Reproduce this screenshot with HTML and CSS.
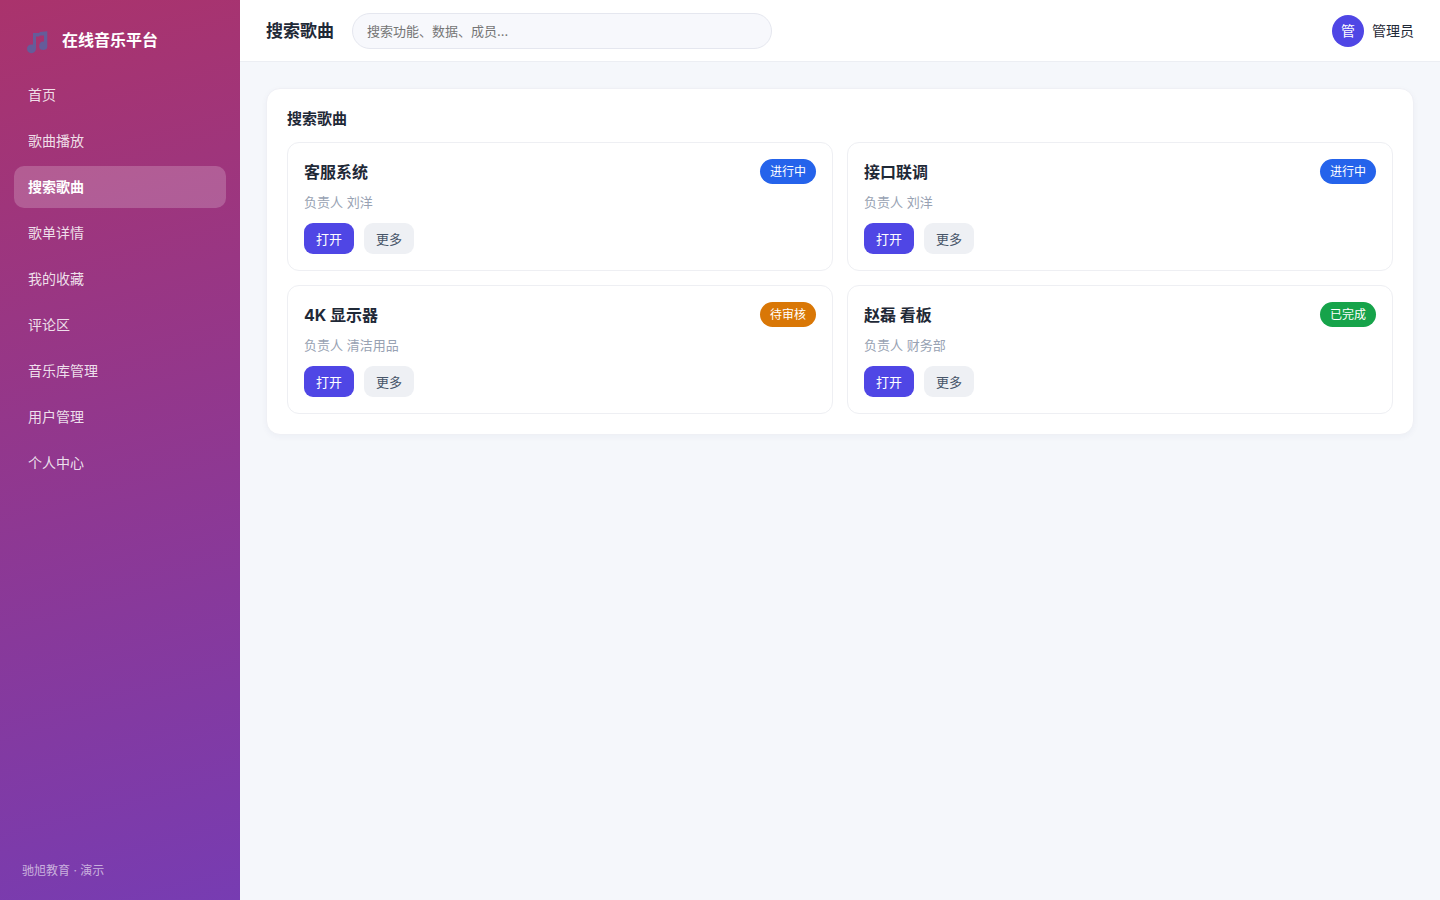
FILE: index.html
```html
<!DOCTYPE html>
<html lang="zh-CN">
<head>
    <meta charset="UTF-8">
    <meta name="viewport" content="width=device-width, initial-scale=1.0">
    <title>搜索歌曲</title>
    <link rel="stylesheet" href="styles.css">
</head>
<body>
    <div class="app">
        <aside class="sidebar">
            <div class="brand">
                <svg class="brand-icon" viewBox="0 0 22 24" aria-hidden="true">
                    <path d="M7 3 H13 L14 2 L21.3 1.2 V17 C21.3 19 19.5 20 17.3 20 C14.8 20 13.2 19 13.2 16 C13.2 13 14.8 11.2 18 11.4 V5.4 L14 5.6 L13 6.6 H10 V18.6 C10 21.2 8.4 23.2 5.4 23.2 C2.6 23.2 1 21.2 1 18.8 C1 16 3.2 14 7 14.6 Z"/>
                </svg>
                <span>在线音乐平台</span>
            </div>
            <nav class="nav">
                <a class="nav-item" href="#">首页</a>
                <a class="nav-item" href="#">歌曲播放</a>
                <a class="nav-item active" href="#">搜索歌曲</a>
                <a class="nav-item" href="#">歌单详情</a>
                <a class="nav-item" href="#">我的收藏</a>
                <a class="nav-item" href="#">评论区</a>
                <a class="nav-item" href="#">音乐库管理</a>
                <a class="nav-item" href="#">用户管理</a>
                <a class="nav-item" href="#">个人中心</a>
            </nav>
            <div class="sidebar-footer">驰旭教育 · 演示</div>
        </aside>

        <div class="main">
            <header class="topbar">
                <h1 class="page-title">搜索歌曲</h1>
                <input class="search" type="search" placeholder="搜索功能、数据、成员…" aria-label="搜索">
                <div class="user">
                    <span class="avatar">管</span>
                    <span>管理员</span>
                </div>
            </header>

            <main class="content">
                <section class="panel">
                    <h2 class="panel-title">搜索歌曲</h2>
                    <div class="grid">
                        <article class="card">
                            <div class="card-head">
                                <h3 class="card-title">客服系统</h3>
                                <span class="badge badge-blue">进行中</span>
                            </div>
                            <p class="card-meta">负责人 刘洋</p>
                            <div class="actions">
                                <button class="btn btn-primary" type="button">打开</button>
                                <button class="btn" type="button">更多</button>
                            </div>
                        </article>
                        <article class="card">
                            <div class="card-head">
                                <h3 class="card-title">接口联调</h3>
                                <span class="badge badge-blue">进行中</span>
                            </div>
                            <p class="card-meta">负责人 刘洋</p>
                            <div class="actions">
                                <button class="btn btn-primary" type="button">打开</button>
                                <button class="btn" type="button">更多</button>
                            </div>
                        </article>
                        <article class="card">
                            <div class="card-head">
                                <h3 class="card-title">4K 显示器</h3>
                                <span class="badge badge-orange">待审核</span>
                            </div>
                            <p class="card-meta">负责人 清洁用品</p>
                            <div class="actions">
                                <button class="btn btn-primary" type="button">打开</button>
                                <button class="btn" type="button">更多</button>
                            </div>
                        </article>
                        <article class="card">
                            <div class="card-head">
                                <h3 class="card-title">赵磊 看板</h3>
                                <span class="badge badge-green">已完成</span>
                            </div>
                            <p class="card-meta">负责人 财务部</p>
                            <div class="actions">
                                <button class="btn btn-primary" type="button">打开</button>
                                <button class="btn" type="button">更多</button>
                            </div>
                        </article>
                    </div>
                </section>
            </main>
        </div>
    </div>
</body>
</html>
```
FILE: styles.css
```css
* {
    margin: 0;
    padding: 0;
    box-sizing: border-box;
}

body {
    font-family: Inter, "Noto Sans CJK SC", sans-serif;
    font-size: 14px;
    line-height: 22px;
    background: #f5f7fb;
    color: #1f2937;
}

.app {
    display: flex;
    min-height: 100vh;
}

/* Sidebar */
.sidebar {
    width: 240px;
    flex-shrink: 0;
    display: flex;
    flex-direction: column;
    padding: 22px 14px 18px;
    background: linear-gradient(165deg, #aa336c, #773cb2);
    color: #fff;
}

.brand {
    display: flex;
    align-items: center;
    gap: 14px;
    height: 36px;
    padding: 0 12px;
    margin-bottom: 16px;
    font-size: 16px;
    font-weight: 700;
}

.brand-icon {
    width: 22px;
    height: 24px;
    margin-top: 3px;
    fill: #655c9a;
}

.nav {
    display: flex;
    flex-direction: column;
    gap: 4px;
}

.nav-item {
    padding: 10px 14px;
    border-radius: 10px;
    color: rgba(255, 255, 255, 0.85);
    text-decoration: none;
}

.nav-item.active {
    background: rgba(255, 255, 255, 0.2);
    color: #fff;
    font-weight: 700;
}

.sidebar-footer {
    margin-top: auto;
    padding: 0 8px;
    font-size: 12px;
    color: rgba(255, 255, 255, 0.6);
}

/* Top bar */
.main {
    flex: 1;
    min-width: 0;
}

.topbar {
    display: flex;
    align-items: center;
    gap: 18px;
    height: 62px;
    padding: 0 26px;
    background: #fff;
    border-bottom: 1px solid #eceef3;
}

.page-title {
    font-size: 17px;
    font-weight: 700;
}

.search {
    flex: 0 1 420px;
    min-width: 0;
    height: 36px;
    padding: 0 14px;
    border: 1px solid #e5e7ef;
    border-radius: 18px;
    background: #f7f8fc;
    font-family: inherit;
    font-size: 13px;
    appearance: none;
}

.search::placeholder {
    color: #757575;
}

.user {
    display: flex;
    align-items: center;
    gap: 8px;
    margin-left: auto;
}

.avatar {
    display: flex;
    align-items: center;
    justify-content: center;
    width: 32px;
    height: 32px;
    border-radius: 50%;
    background: #4f46e5;
    color: #fff;
}

/* Content */
.content {
    padding: 26px;
}

.panel {
    padding: 20px;
    background: #fff;
    border: 1px solid #eff0f5;
    border-radius: 14px;
    box-shadow: 0 2px 6px rgba(30, 40, 90, 0.04);
}

.panel-title {
    margin-bottom: 13px;
    font-size: 15px;
    line-height: 20px;
    font-weight: 700;
}

.grid {
    display: grid;
    grid-template-columns: 1fr 1fr;
    gap: 14px;
}

.card {
    padding: 16px;
    border: 1px solid #eeeff3;
    border-radius: 12px;
}

.card-head {
    display: flex;
    align-items: center;
    justify-content: space-between;
}

.card-title {
    font-size: 16px;
    font-weight: 700;
}

.badge {
    padding: 0 10px;
    border-radius: 13px;
    font-size: 12px;
    line-height: 25px;
    color: #fff;
}

.badge-blue {
    background: #2563eb;
}

.badge-orange {
    background: #d97706;
}

.badge-green {
    background: #16a34a;
}

.card-meta {
    margin: 8px 0 10px;
    font-size: 13px;
    line-height: 21px;
    color: #98a2b3;
}

.actions {
    display: flex;
    gap: 10px;
}

.btn {
    height: 31px;
    padding: 0 12px;
    border: none;
    border-radius: 9px;
    background: #eef0f4;
    color: #475569;
    font-family: inherit;
    font-size: 13px;
    cursor: pointer;
}

.btn-primary {
    background: #4f46e5;
    color: #fff;
}
```
